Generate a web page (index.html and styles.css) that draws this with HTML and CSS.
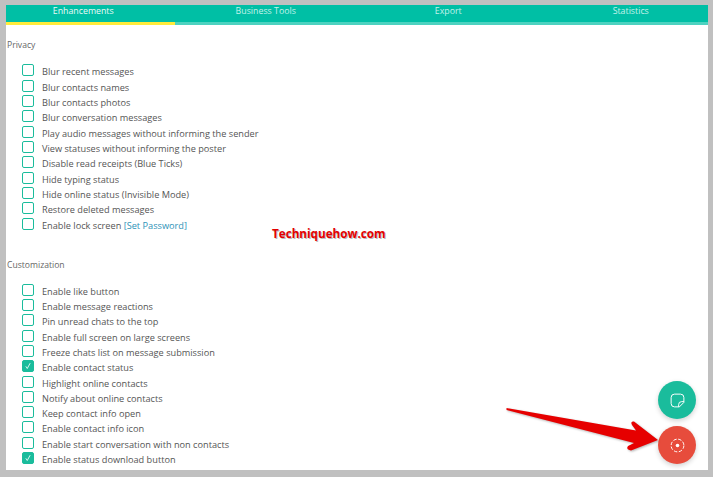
FILE: index.html
```html
<!DOCTYPE html>
<html lang="en">
<head>
<meta charset="utf-8">
<title>Enhancements</title>
<link rel="stylesheet" href="styles.css">
</head>
<body>
<main class="panel">
  <nav class="tabs">
    <a class="tab active">Enhancements</a>
    <a class="tab">Business Tools</a>
    <a class="tab">Export</a>
    <a class="tab">Statistics</a>
  </nav>
  <section class="group privacy">
    <h2 class="group-title">Privacy</h2>
    <ul class="options">
      <li class="option"><span class="box"></span>Blur recent messages</li>
      <li class="option"><span class="box"></span>Blur contacts names</li>
      <li class="option"><span class="box"></span>Blur contacts photos</li>
      <li class="option"><span class="box"></span>Blur conversation messages</li>
      <li class="option"><span class="box"></span>Play audio messages without informing the sender</li>
      <li class="option"><span class="box"></span>View statuses without informing the poster</li>
      <li class="option"><span class="box"></span>Disable read receipts (Blue Ticks)</li>
      <li class="option"><span class="box"></span>Hide typing status</li>
      <li class="option"><span class="box"></span>Hide online status (Invisible Mode)</li>
      <li class="option"><span class="box"></span>Restore deleted messages</li>
      <li class="option"><span class="box"></span>Enable lock screen&nbsp;<a class="link">[Set Password]</a></li>
    </ul>
  </section>
  <section class="group customization">
    <h2 class="group-title">Customization</h2>
    <ul class="options tight">
      <li class="option"><span class="box"></span>Enable like button</li>
      <li class="option"><span class="box"></span>Enable message reactions</li>
      <li class="option"><span class="box"></span>Pin unread chats to the top</li>
      <li class="option"><span class="box"></span>Enable full screen on large screens</li>
      <li class="option"><span class="box"></span>Freeze chats list on message submission</li>
      <li class="option"><span class="box checked"><svg viewBox="0 0 12 12" class="tick"><path d="M3.4 6.4 5.1 9 8.6 2.6"/></svg></span>Enable contact status</li>
      <li class="option"><span class="box"></span>Highlight online contacts</li>
      <li class="option"><span class="box"></span>Notify about online contacts</li>
      <li class="option"><span class="box"></span>Keep contact info open</li>
      <li class="option"><span class="box"></span>Enable contact info icon</li>
      <li class="option"><span class="box"></span>Enable start conversation with non contacts</li>
      <li class="option"><span class="box checked"><svg viewBox="0 0 12 12" class="tick"><path d="M3.4 6.4 5.1 9 8.6 2.6"/></svg></span>Enable status download button</li>
    </ul>
  </section>
  <div class="watermark">Techniquehow.com</div>
  <button class="fab fab-green" aria-label="Sticker">
    <svg viewBox="0 0 20 20" class="fab-icon"><path d="M6 1.500h8a4.500 4.500 0 0 1 4.500 4.500v6.500l-6 6H6A4.500 4.500 0 0 1 1.500 14V6A4.500 4.500 0 0 1 6 1.500Z"/><path d="M18.500 11.500h-3a4 4 0 0 0-4 4v3"/></svg>
  </button>
  <button class="fab fab-red" aria-label="Capture">
    <svg viewBox="0 0 20 20" class="fab-icon"><circle cx="10" cy="10" r="8.500" stroke-dasharray="4.500 2.170"/><circle class="dot" cx="10" cy="10" r="2.400"/></svg>
  </button>
  <svg class="arrow" viewBox="500 400 160 55"><path d="M506.500 408 L636 430.500 L632 425 Q630 421 634 421.500 L658 440 L631 450.500 Q625.500 449.500 628 446 L634 443 L506.500 410 Z"/></svg>
</main>
</body>
</html>
```
FILE: styles.css
```css
* { box-sizing: border-box; }
html, body { margin: 0; height: 100%; }
body {
  background: #c0c0c0;
  padding: 5px 5px 7px 6px;
  font-family: "Open Sans", "Noto Sans", sans-serif;
  font-size: 9.200px;
  color: #555;
  overflow: hidden;
}
.panel {
  position: relative;
  height: 465px;
  background: #fff;
  overflow: hidden;
}
.tabs {
  display: flex;
  margin: 0 -14px;
  height: 20px;
  background: #00bfa5;
  font-size: 8.800px;
}
.tab {
  flex: 1;
  text-align: center;
  color: #c4f2ea;
  line-height: 12px;
  border-bottom: 3px solid #4dd2c0;
}
.tab.active { color: #eafaf7; border-bottom-color: #ffeb3b; }
.group-title {
  margin: 0 0 0 1px;
  font-size: 8.600px;
  font-weight: 400;
  line-height: 12px;
  color: #666;
}
.privacy { margin-top: 14px; }
.customization { margin-top: 26px; }
.options { list-style: none; margin: 13px 0 0; padding: 0 0 0 16px; }
.option {
  display: flex;
  align-items: center;
  height: 15.350px;
  white-space: nowrap;
}
.tight .option { height: 15.270px; }
.box {
  flex: none;
  width: 12px;
  height: 12px;
  margin: -3px 8px 0 0;
  border: 1px solid #1abc9c;
  border-radius: 2px;
}
.box.checked { background: #1abc9c; }
.tick { display: block; width: 10px; height: 10px; fill: none; stroke: #fff; stroke-width: 1; }
.link { color: #2e93b8; }
.watermark {
  position: absolute;
  left: 266px;
  top: 220px;
  font-family: "Open Sans", sans-serif;
  font-size: 11.700px;
  font-weight: 700;
  color: #e30000;
  text-shadow: 1px 1px 0 #bbb;
}
.fab {
  position: absolute;
  left: 652px;
  width: 38px;
  height: 38px;
  padding: 0;
  border: 0;
  border-radius: 50%;
  display: flex;
  align-items: center;
  justify-content: center;
  box-shadow: 0 2px 5px rgba(0,0,0,.18);
}
.fab-green { top: 376px; background: #1abc9c; }
.fab-red { top: 421px; background: #e74c3c; }
.fab-icon { width: 15px; height: 15px; fill: none; stroke: #fff; stroke-width: 1.300; }
.fab-icon .dot { fill: #fff; stroke: none; }
.arrow {
  position: absolute;
  left: 494px;
  top: 395px;
  width: 160px;
  height: 55px;
  fill: #e60000;
  filter: drop-shadow(1px 1px 1px rgba(0,0,0,.3));
}
```
